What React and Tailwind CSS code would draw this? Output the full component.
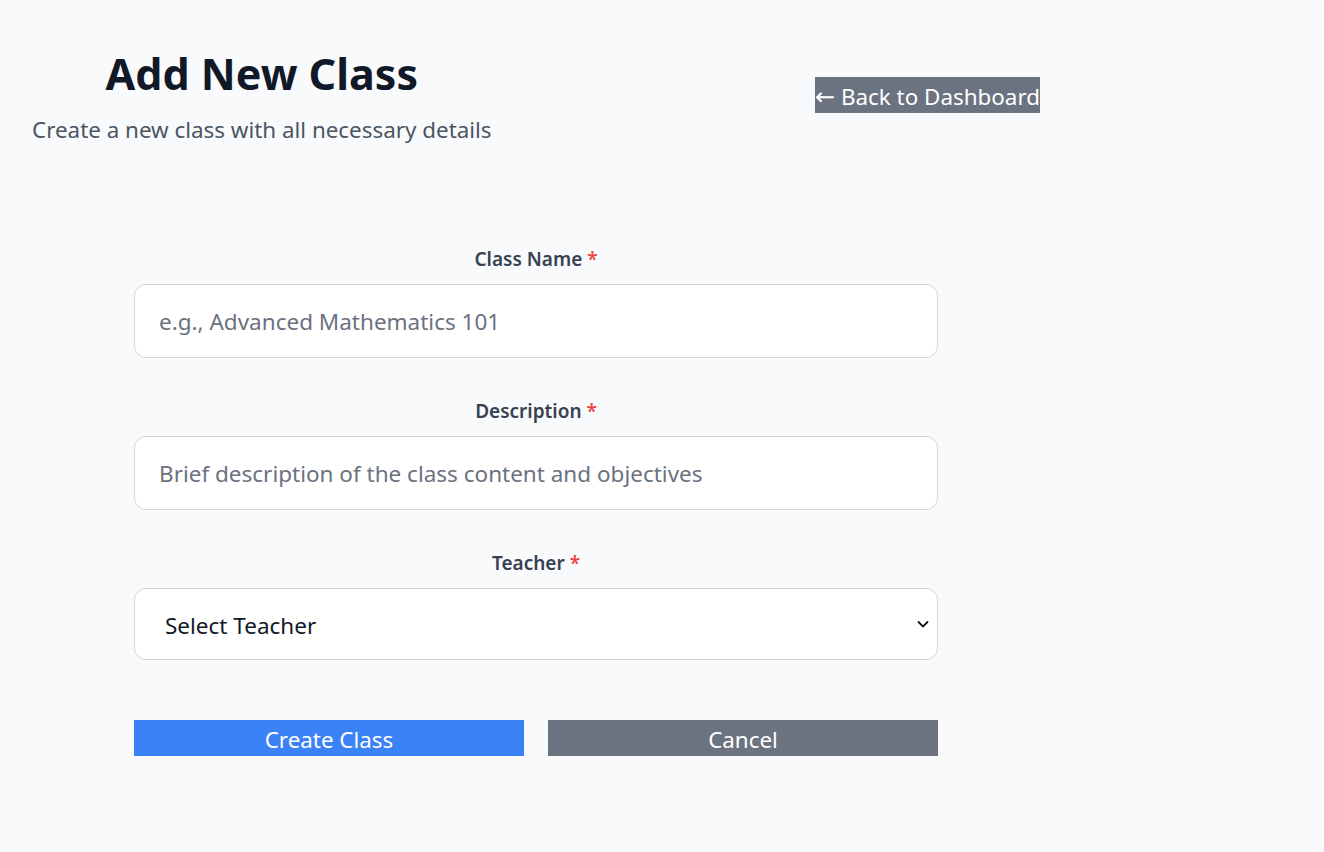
import React from 'react';

function Field({ label, children }) {
  return (
    <div className="flex flex-col">
      <label className="mb-3 text-center text-[19px] font-semibold leading-[26px] text-[#374151]">
        {label} <span className="text-[#ef4444]">*</span>
      </label>
      {children}
    </div>
  );
}

const inputCls =
  'h-[74px] w-full rounded-xl border border-[#d1d5db] bg-white px-6 text-[22.5px] text-[#111827] outline-none placeholder:text-[#6b7280]';

export default function App() {
  return (
    <div className="min-h-screen bg-[#f9fafb] p-8 font-['Noto_Sans','Open_Sans',sans-serif]">
      <div className="w-[1008px]">
        <header className="flex items-center justify-between pt-4">
          <div className="flex flex-col items-center">
            <h1 className="text-[43px] font-bold leading-[52px] text-[#111827]">Add New Class</h1>
            <p className="mt-[15px] text-[22.4px] leading-[30px] text-[#4b5563]">
              Create a new class with all necessary details
            </p>
          </div>
          <button type="button" className="mb-1 h-9 bg-[#6b7280] pt-1 text-[22.4px] leading-8 text-white">
            <span className="font-['DejaVu_Sans',sans-serif] text-[24px] leading-none">←</span> Back to Dashboard
          </button>
        </header>

        <form className="mx-auto mt-[101px] flex w-[804px] flex-col gap-10">
          <Field label="Class Name">
            <input placeholder="e.g., Advanced Mathematics 101" className={inputCls} />
          </Field>
          <Field label="Description">
            <input
              placeholder="Brief description of the class content and objectives"
              className={inputCls}
            />
          </Field>
          <Field label="Teacher">
            <div className="relative">
              <select className="h-[72px] w-full appearance-none rounded-xl border border-[#d1d5db] bg-white pl-[30px] pr-10 pt-1 text-[22.5px] text-[#111827] outline-none">
                <option>Select Teacher</option>
              </select>
              <svg
                className="pointer-events-none absolute right-[8px] top-1/2 -translate-y-1/2"
                width="14"
                height="14"
                viewBox="0 0 14 14"
                fill="none"
              >
                <path d="M2.5 5l4.5 4.5L11.5 5" stroke="#111827" strokeWidth="1.8" strokeLinecap="round" strokeLinejoin="round" />
              </svg>
            </div>
          </Field>

          <div className="mt-5 flex gap-6">
            <button type="button" className="h-9 flex-1 bg-[#3b82f6] pt-1 text-[22.4px] leading-8 text-white">
              Create Class
            </button>
            <button type="button" className="h-9 flex-1 bg-[#6b7280] pt-1 text-[22.4px] leading-8 text-white">
              Cancel
            </button>
          </div>
        </form>
      </div>
    </div>
  );
}
